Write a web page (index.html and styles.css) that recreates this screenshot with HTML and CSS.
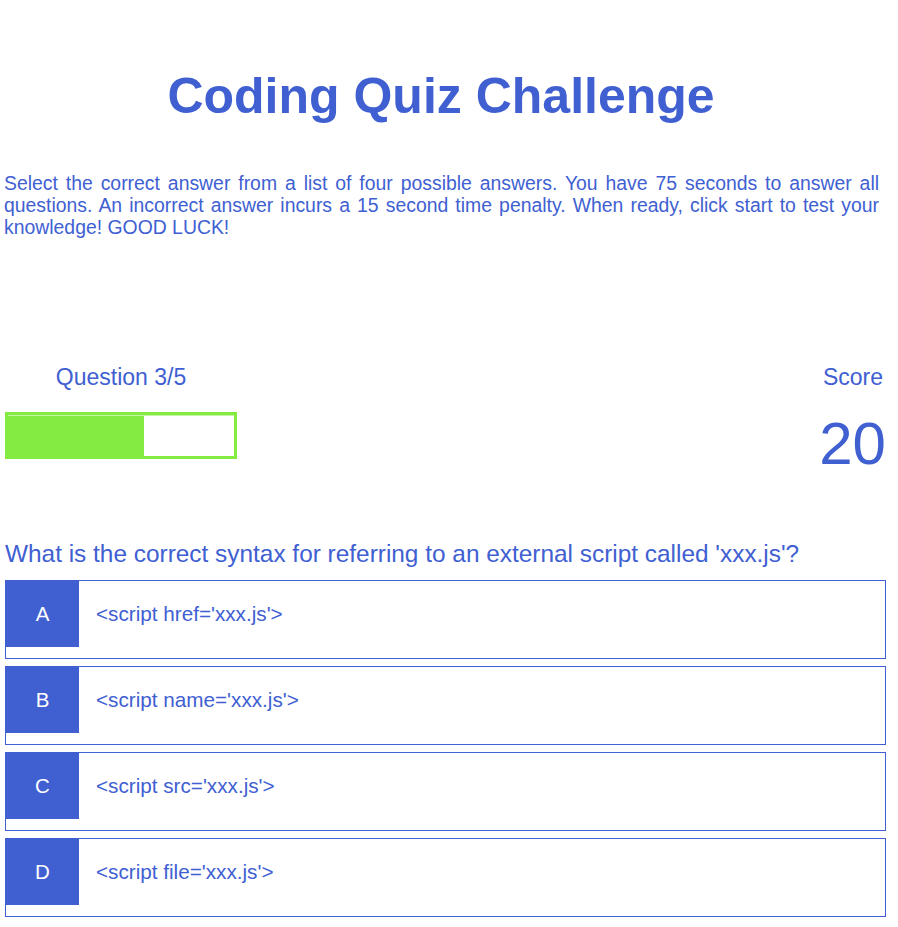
FILE: index.html
```html
<!DOCTYPE html>
<html lang="en">
<head>
<meta charset="utf-8">
<title>Coding Quiz Challenge</title>
<link rel="stylesheet" href="styles.css">
</head>
<body>
<main class="page">
  <h1 class="title">Coding Quiz Challenge</h1>
  <p class="intro">Select the correct answer from a list of four possible answers. You have 75 seconds to answer all questions. An incorrect answer incurs a 15 second time penalty. When ready, click start to test your knowledge! GOOD LUCK!</p>

  <section class="stats">
    <div class="progress-col">
      <div class="label">Question 3/5</div>
      <div class="bar"><div class="bar-inner"><div class="bar-fill" style="width:60%"></div></div></div>
    </div>
    <div class="score-col">
      <div class="label">Score</div>
      <div class="score">20</div>
    </div>
  </section>

  <h2 class="question">What is the correct syntax for referring to an external script called 'xxx.js'?</h2>

  <div class="answers">
    <button class="answer"><span class="letter">A</span><span class="text">&lt;script href='xxx.js'&gt;</span></button>
    <button class="answer"><span class="letter">B</span><span class="text">&lt;script name='xxx.js'&gt;</span></button>
    <button class="answer"><span class="letter">C</span><span class="text">&lt;script src='xxx.js'&gt;</span></button>
    <button class="answer"><span class="letter">D</span><span class="text">&lt;script file='xxx.js'&gt;</span></button>
  </div>
</main>
</body>
</html>
```

FILE: styles.css
```css
* { box-sizing: border-box; }

body {
  margin: 0;
  background: #ffffff;
  font-family: "Liberation Sans", Arial, sans-serif;
  color: #4060d2;
}

.page {
  width: 881px;
  margin-left: 5px;
}

.title {
  margin: 68px 0 0;
  padding-right: 9px;
  font-size: 50px;
  line-height: 57.5px;
  font-weight: bold;
  text-align: center;
}

.intro {
  width: 875px;
  margin: 46px 0 0 -1px;
  font-size: 19.4px;
  line-height: 22px;
  text-align: justify;
}

.stats {
  display: flex;
  justify-content: space-between;
  margin-top: 126px;
}

.label {
  font-size: 23px;
  line-height: 26px;
}

.progress-col {
  width: 232px;
  text-align: center;
}

.bar {
  margin-top: 22px;
  height: 47px;
  border: 3px solid #84eb41;
  background: #ffffff;
}

.bar-inner {
  height: 100%;
  border-top: 1px solid #c6f5a8;
  background: #ffffff;
  display: flex;
}

.bar-fill {
  height: 100%;
  background: #84eb41;
}

.score-col {
  text-align: right;
  padding-right: 0;
}

.score-col .label {
  padding-right: 3px;
}

.score {
  margin-top: 24px;
  font-size: 60px;
  line-height: 60px;
}

.question {
  margin: 66px 0 0;
  font-size: 24.4px;
  line-height: 27.6px;
  font-weight: normal;
}

.answers {
  margin-top: 13px;
  display: flex;
  flex-direction: column;
  gap: 7px;
}

.answer {
  display: flex;
  align-items: flex-start;
  width: 100%;
  height: 79px;
  margin: 0;
  padding: 0;
  border: 1px solid #4060d2;
  background: #ffffff;
  font-family: inherit;
  color: #4060d2;
  text-align: left;
  cursor: pointer;
}

.letter {
  flex: none;
  width: 73px;
  height: 66px;
  display: flex;
  align-items: center;
  justify-content: center;
  background: #4060d2;
  color: #ffffff;
  font-size: 20.5px;
}

.text {
  height: 66px;
  display: flex;
  align-items: center;
  padding-left: 17px;
  font-size: 20.7px;
}
```
